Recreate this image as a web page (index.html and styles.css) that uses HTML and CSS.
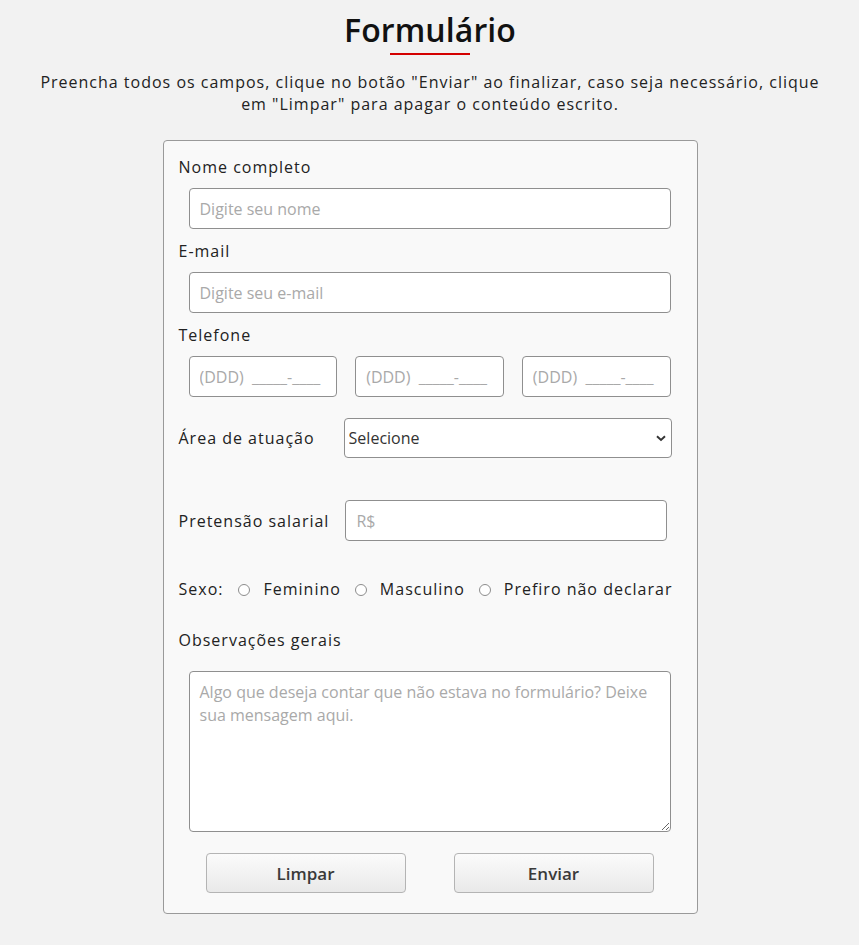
FILE: index.html
```html
<!DOCTYPE html>
<html lang="pt-BR">
<head>
<meta charset="utf-8">
<title>Formulário</title>
<link rel="stylesheet" href="styles.css">
</head>
<body>
<header class="head">
  <h1 class="title">Formulário</h1>
  <div class="underline"></div>
  <p class="intro">Preencha todos os campos, clique no botão "Enviar" ao finalizar, caso seja necessário, clique em "Limpar" para apagar o conteúdo escrito.</p>
</header>
<form class="card">
  <label class="lbl" for="nome">Nome completo</label>
  <div class="field"><input class="txt" id="nome" type="text" placeholder="Digite seu nome"></div>

  <label class="lbl lbl-gap" for="email">E-mail</label>
  <div class="field"><input class="txt" id="email" type="text" placeholder="Digite seu e-mail"></div>

  <label class="lbl lbl-gap" for="tel1">Telefone</label>
  <div class="field phones">
    <input class="txt" id="tel1" type="text" placeholder="(DDD)  _____-____">
    <input class="txt" type="text" placeholder="(DDD)  _____-____">
    <input class="txt" type="text" placeholder="(DDD)  _____-____">
  </div>

  <div class="row row-area">
    <label class="lbl" for="area">Área de atuação</label>
    <div class="select-wrap">
      <select class="sel" id="area"><option>Selecione</option></select>
      <svg class="chev" width="10" height="7" viewBox="0 0 10 7"><path d="M1 1.2 L5 5 L9 1.2" fill="none" stroke="#333" stroke-width="1.9"/></svg>
    </div>
  </div>

  <div class="row row-sal">
    <label class="lbl" for="sal">Pretensão salarial</label>
    <input class="txt sal" id="sal" type="text" placeholder="R$">
  </div>

  <div class="row sexo">
    <span class="lbl">Sexo:</span>
    <input class="radio" type="radio" name="sexo" id="f"><label class="lbl" for="f">Feminino</label>
    <input class="radio" type="radio" name="sexo" id="m"><label class="lbl" for="m">Masculino</label>
    <input class="radio" type="radio" name="sexo" id="n"><label class="lbl" for="n">Prefiro não declarar</label>
  </div>

  <label class="lbl obs" for="obs">Observações gerais</label>
  <div class="field field-area"><textarea class="area" id="obs" placeholder="Algo que deseja contar que não estava no formulário? Deixe sua mensagem aqui."></textarea></div>

  <div class="buttons">
    <button class="btn" type="reset">Limpar</button>
    <button class="btn" type="button">Enviar</button>
  </div>
</form>
</body>
</html>
```
FILE: styles.css
```css
* { box-sizing: border-box; }
html, body { margin: 0; padding: 0; }
body {
  background: #f2f2f2;
  font-family: "Open Sans", "Liberation Sans", sans-serif;
  color: #1e1e1e;
  padding: 8px 0 0 1px;
}
.head {
  display: flex;
  flex-direction: column;
  align-items: center;
}
.title {
  margin: 0;
  font-size: 32px;
  line-height: 44px;
  font-weight: 600;
  letter-spacing: 0.1px;
  color: #111;
}
.underline {
  width: 80px;
  height: 2px;
  background: #d40000;
  margin-top: 1px;
}
.intro {
  margin: 16px 0 0;
  max-width: 800px;
  text-align: center;
  font-size: 16px;
  line-height: 22px;
  letter-spacing: 1px;
  color: #222;
}
.card {
  width: 535px;
  margin: 25px auto 0;
  background: #f9f9f9;
  border: 1px solid #9a9a9a;
  border-radius: 4px;
  padding: 15px 26px 20px 15px;
  display: flex;
  flex-direction: column;
}
.lbl {
  font-size: 16px;
  line-height: 22px;
  letter-spacing: 1px;
  color: #222;
  white-space: nowrap;
  flex-shrink: 0;
}
.lbl-gap { margin-top: 11px; }
.field {
  margin-top: 10px;
  padding-left: 10px;
}
.txt {
  display: block;
  width: 100%;
  height: 41px;
  border: 1px solid #8f8f8f;
  border-radius: 4px;
  background: #fff;
  padding: 0 10px;
  font-family: "Open Sans", "Liberation Sans", sans-serif;
  font-size: 16px;
  color: #222;
  outline: none;
}
.txt::placeholder, .area::placeholder { color: #a9a9a9; }
.phones {
  display: grid;
  grid-template-columns: repeat(3, 1fr);
  column-gap: 18px;
}
.row {
  display: flex;
  align-items: center;
}
.row-area { margin-top: 21px; }
.select-wrap {
  position: relative;
  margin-left: 29px;
  margin-right: -1px;
  flex: 1;
}
.sel {
  display: block;
  width: 100%;
  height: 40px;
  appearance: none;
  -webkit-appearance: none;
  border: 1px solid #8f8f8f;
  border-radius: 4px;
  background: #fff;
  padding: 0 4px;
  font-family: "Open Sans", "Liberation Sans", sans-serif;
  font-size: 16px;
  color: #333;
  outline: none;
}
.chev {
  position: absolute;
  right: 6px;
  top: 17px;
  pointer-events: none;
}
.row-sal { margin-top: 42px; }
.sal {
  margin-left: 16px;
  width: 322px;
  flex-shrink: 0;
}
.sexo { margin-top: 37px; }
.radio {
  appearance: none;
  -webkit-appearance: none;
  flex-shrink: 0;
  width: 12px;
  height: 12px;
  margin: 1px 13px 0 14px;
  border: 1px solid #8d8d8d;
  border-radius: 50%;
  background: #fff;
}
.sexo .radio:first-of-type { margin-left: 15px; }
.obs { margin-top: 29px; }
.area {
  display: block;
  width: 100%;
  height: 161px;
  border: 1px solid #8f8f8f;
  border-radius: 4px;
  background: #fff;
  padding: 9px 10px;
  font-family: "Open Sans", "Liberation Sans", sans-serif;
  font-size: 16px;
  line-height: 23px;
  color: #222;
  resize: vertical;
  outline: none;
}
.field-area { margin-top: 20px; }
.buttons {
  display: flex;
  justify-content: center;
  gap: 48px;
  margin-top: 21px;
  padding-left: 10px;
}
.btn {
  width: 200px;
  height: 40px;
  border: 1px solid #b4b4b4;
  border-radius: 4px;
  background: linear-gradient(#fbfbfb, #e9e9e9);
  font-family: "Open Sans", "Liberation Sans", sans-serif;
  font-size: 17px;
  font-weight: 600;
  color: #3a3a3a;
}
```
